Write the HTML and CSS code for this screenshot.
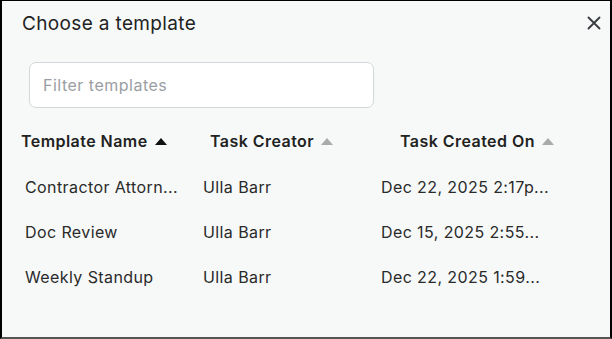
FILE: index.html
```html
<!DOCTYPE html>
<html>
<head>
<meta charset="utf-8">
<link rel="stylesheet" href="styles.css">
</head>
<body>
<div class="dialog">
  <div class="head">
    <h1 class="title">Choose a template</h1>
    <button class="close" aria-label="Close">
      <svg width="14" height="14" viewBox="0 0 14 14"><path d="M1.5 1.5L12.5 12.5M12.5 1.5L1.5 12.5" stroke="#3a3d40" stroke-width="1.9" stroke-linecap="round"/></svg>
    </button>
  </div>
  <div class="filter"><input class="filter-input" type="text" placeholder="Filter templates"></div>
  <div class="table">
    <div class="thead">
      <div class="th th1">Template Name <span class="arrow dark"></span></div>
      <div class="th th2">Task Creator <span class="arrow"></span></div>
      <div class="th th3">Task Created On <span class="arrow"></span></div>
    </div>
    <div class="row first">
      <div class="td c1">Contractor Attorn...</div>
      <div class="td c2">Ulla Barr</div>
      <div class="td c3">Dec 22, 2025 2:17p...</div>
    </div>
    <div class="row">
      <div class="td c1">Doc Review</div>
      <div class="td c2">Ulla Barr</div>
      <div class="td c3">Dec 15, 2025 2:55...</div>
    </div>
    <div class="row">
      <div class="td c1">Weekly Standup</div>
      <div class="td c2">Ulla Barr</div>
      <div class="td c3">Dec 22, 2025 1:59...</div>
    </div>
  </div>
</div>
</body>
</html>
```
FILE: styles.css
```css
html, body { margin: 0; padding: 0; }
body { width: 612px; height: 339px; overflow: hidden; font-family: Inter, "Liberation Sans", sans-serif; }
.dialog {
  box-sizing: border-box;
  width: 612px; height: 339px;
  background: #f7f9f9;
  border-top: 1px solid #000;
  border-left: 2px solid #000;
  border-right: 2px solid #000;
  border-bottom: 2px solid #555;
}
.head { display: flex; justify-content: space-between; align-items: center; padding: 9px 9px 0 20px; height: 26px; }
.title { margin: 0; font-size: 19px; font-weight: 400; color: #222; letter-spacing: 0.35px; }
.close { border: 0; background: none; padding: 0; width: 14px; height: 14px; display: flex; }
.filter { padding: 26px 0 0 27px; }
.filter-input {
  box-sizing: border-box; width: 345px; height: 46px;
  border: 1px solid #d3d6da; border-radius: 7px; background: #fff;
  padding: 0 13px; font-family: inherit; font-size: 16px; letter-spacing: 0.5px; color: #222; outline: none;
}
.filter-input::placeholder { color: #9a9ea3; }
.thead { display: flex; padding: 23px 0 0 19px; height: 20px; align-items: center; }
.th { font-size: 16px; font-weight: 600; color: #222; white-space: nowrap; display: flex; align-items: center; letter-spacing: 0.45px; }
.th1 { width: 189px; }
.th2 { width: 190px; }
.arrow { display: inline-block; width: 0; height: 0; border-left: 6px solid transparent; border-right: 6px solid transparent; border-bottom: 7px solid #aaa; margin-left: 7px; }
.arrow.dark { border-bottom-color: #111; }
.row { display: flex; padding-left: 23px; height: 45px; align-items: center; }
.row.first { margin-top: 13px; }
.td { font-size: 16px; color: #2a2a2a; white-space: nowrap; letter-spacing: 0.4px; }
.c1 { width: 178px; }
.c2 { width: 178px; }
```
